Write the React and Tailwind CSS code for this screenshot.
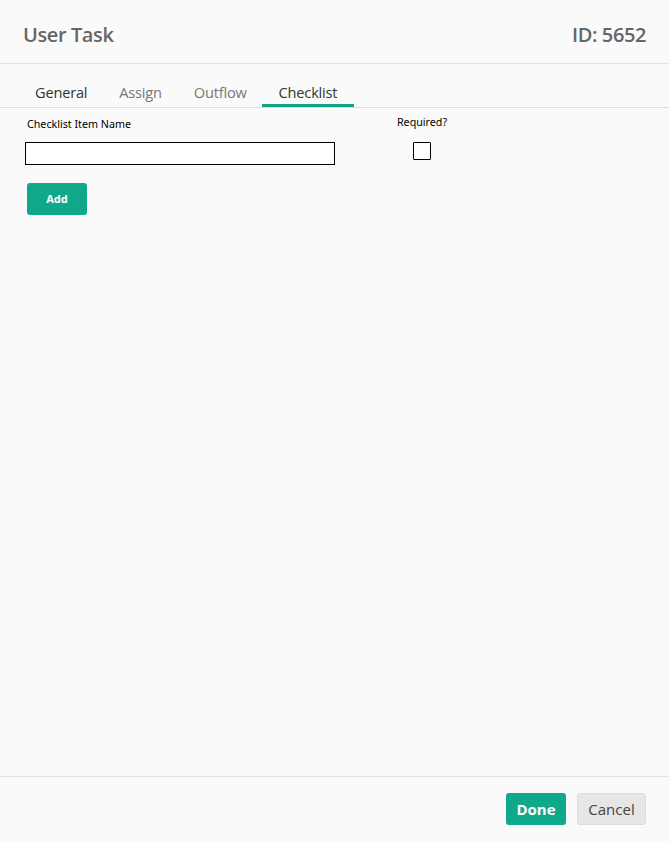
// App.jsx — User Task dialog, Checklist tab

const tabs = ['General', 'Assign', 'Outflow', 'Checklist']

export default function App() {
  const active = 'Checklist'

  return (
    <div className="w-[669px] h-[842px] bg-[#fafafa] flex flex-col font-['Open_Sans',sans-serif]">
      {/* Header */}
      <div className="h-[64px] shrink-0 flex items-center justify-between pl-[23px] pr-[23px] pt-[6px] border-b border-[#e2e2e2]">
        <h1 className="text-[20px] text-[#666] tracking-[-0.4px] font-semibold">User Task</h1>
        <span className="text-[20px] text-[#666] tracking-[-0.4px] font-semibold">ID: 5652</span>
      </div>

      {/* Tabs */}
      <div className="h-[44px] shrink-0 flex items-end pl-[18px] border-b border-[#dedede]">
        {tabs.map(t => (
          <button
            key={t}
            className={`h-[28px] px-[17px] -mr-[2px] text-[14.6px] leading-[20px] tracking-[-0.2px] border-b-[3px] ${
              t === active ? 'text-[#333] border-[#12a487]' : t === 'General' ? 'text-[#333] border-transparent' : 'text-[#777] border-transparent'
            }`}
          >
            {t}
          </button>
        ))}
      </div>

      {/* Form */}
      <div className="flex-1 px-[25px] pt-[8px] font-['Noto_Sans',sans-serif]">
        <div className="flex">
          <div className="w-[310px]">
            <label className="block text-[10.7px] text-black ml-[2px] h-[26px]">Checklist Item Name</label>
            <input type="text" className="block w-[310px] h-[23px] border border-black bg-white outline-none" />
          </div>
          <div className="ml-[62px] flex flex-col items-center w-[50px]">
            <span className="text-[10.7px] text-black -mt-[2px] h-[28px]">Required?</span>
            <input type="checkbox" className="appearance-none w-[18px] h-[18px] border border-black bg-white rounded-[1px]" />
          </div>
        </div>
        <button className="mt-[18px] ml-[2px] w-[60px] h-[32px] bg-[#10a88b] text-white text-[11px] font-bold rounded-[3px]">
          Add
        </button>
      </div>

      {/* Footer */}
      <div className="h-[66px] shrink-0 border-t border-[#e2e2e2] flex items-start justify-end gap-[11px] pt-[16px] pr-[23px]">
        <button className="w-[60px] h-[32px] bg-[#10a88b] text-white text-[15px] font-bold rounded-[3px]">
          Done
        </button>
        <button className="w-[69px] h-[32px] bg-[#e6e6e6] text-[#444] text-[15px] rounded-[3px] border border-[#dcdcdc]">
          Cancel
        </button>
      </div>
    </div>
  )
}
